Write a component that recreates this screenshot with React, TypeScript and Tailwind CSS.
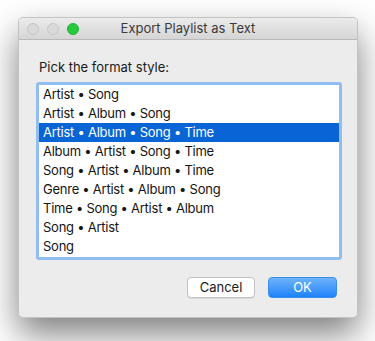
import React from "react";

const rows = [
  "Artist • Song",
  "Artist • Album • Song",
  "Artist • Album • Song • Time",
  "Album • Artist • Song • Time",
  "Song • Artist • Album • Time",
  "Genre • Artist • Album • Song",
  "Time • Song • Artist • Album",
  "Song • Artist",
  "Song",
];

export default function App() {
  return (
    <div
      className="w-[375px] h-[341px] bg-white pt-[17px] pl-[18px] overflow-hidden"
      style={{ fontFamily: "Inter, 'Noto Sans', sans-serif" }}
    >
      <div className="w-[340px] h-[301px] bg-[#ececec] rounded-[5px] border border-[#c4c4c4] shadow-[0_16px_34px_rgba(0,0,0,0.5)] flex flex-col overflow-hidden">
        <div className="h-[22px] shrink-0 flex items-center relative bg-gradient-to-b from-[#ebebeb] to-[#d5d5d5] border-b border-[#b9b9b9]">
          <div className="flex gap-[8px] pl-[8px]">
            <div className="w-[12px] h-[12px] rounded-full bg-[#d9d9d9] border border-[#c6c6c6]" />
            <div className="w-[12px] h-[12px] rounded-full bg-[#d9d9d9] border border-[#c6c6c6]" />
            <div className="w-[12px] h-[12px] rounded-full bg-[#27c93f] border border-[#22b23a]" />
          </div>
          <div className="absolute inset-0 flex items-center justify-center text-[13px] text-[#3a3a3a]">
            Export Playlist as Text
          </div>
        </div>
        <div className="pl-[20px] pt-[19px] text-[13px] text-[#1a1a1a] leading-[16px]">
          Pick the format style:
        </div>
        <div className="ml-[17px] mt-[7px] w-[306px] h-[178px] shrink-0 rounded-[3px] border-[3px] border-[#92bdf1] bg-white">
          {rows.map((r, i) => (
            <div
              key={i}
              className={`h-[19px] leading-[19px] pl-[4px] text-[13px] tracking-[-0.25px] ${
                i === 2 ? "bg-[#0964d6] text-white" : "text-[#141414]"
              }`}
            >
              {r}
            </div>
          ))}
        </div>
        <div className="flex justify-end gap-[13px] pr-[20px] mt-[17px]">
          <div className="w-[68px] h-[21px] rounded-[4px] bg-white border border-[#c2c2c2] shadow-[0_1px_0_rgba(0,0,0,0.08)] flex items-center justify-center text-[13px] text-[#1a1a1a]">
            Cancel
          </div>
          <div className="w-[69px] h-[21px] rounded-[4px] bg-gradient-to-b from-[#6cb3fa] to-[#1a82fb] border border-[#3d8ee8] flex items-center justify-center text-[13px] text-white">
            OK
          </div>
        </div>
      </div>
    </div>
  );
}
